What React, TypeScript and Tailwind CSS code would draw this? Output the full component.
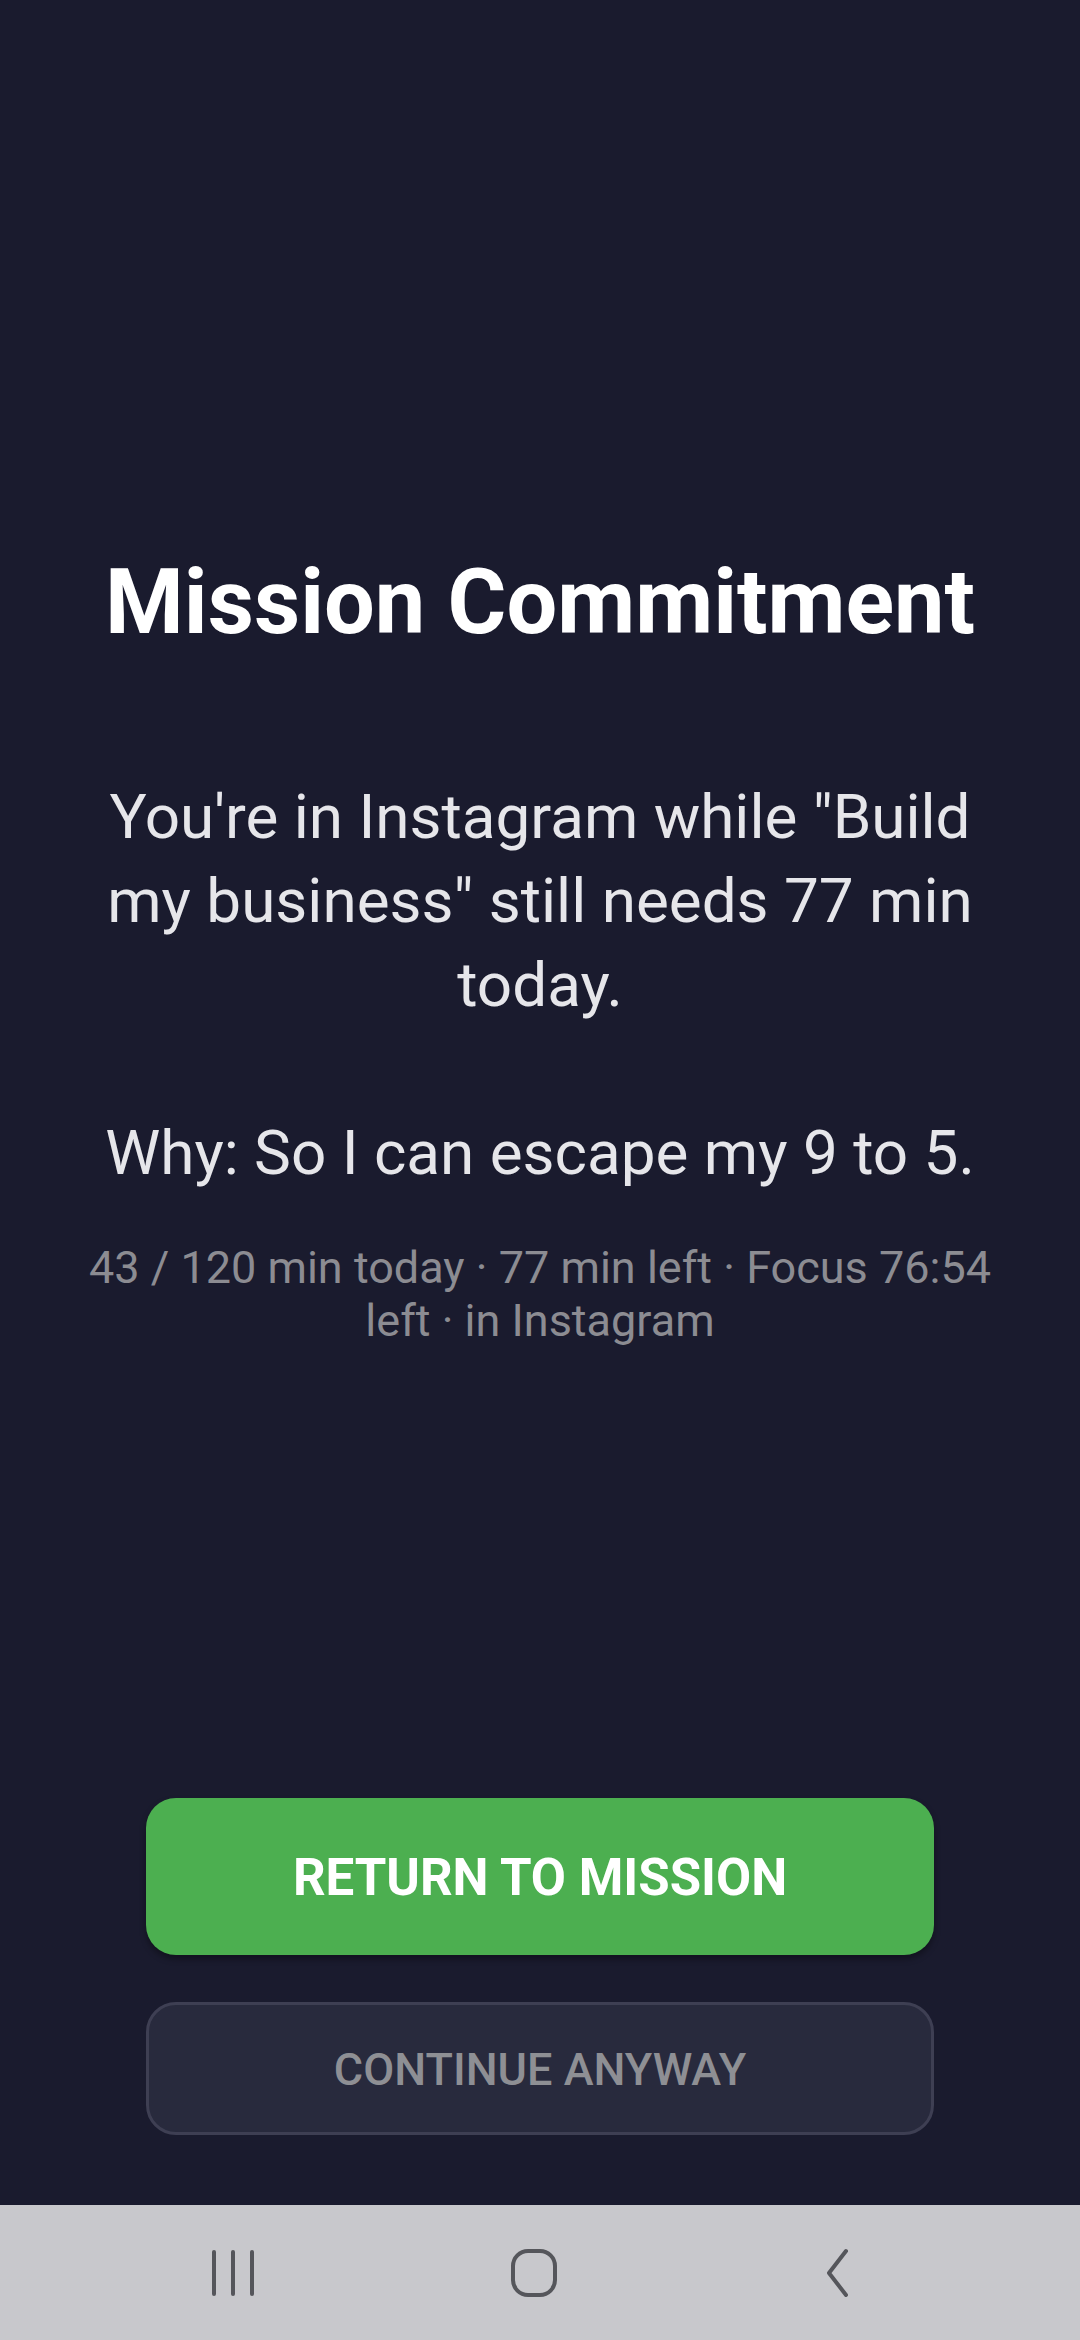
import React from 'react'

const font = { fontFamily: 'Roboto, "Noto Sans", sans-serif' }

function NavBar() {
  return (
    <div className="flex h-[135px] w-full items-center gap-[201px] bg-[#c8c8cc] pl-[183px]">
      {/* recents */}
      <div className="flex w-[100px] justify-center">
        <svg width="60" height="50" viewBox="0 0 60 50">
          <g stroke="#55565b" strokeWidth="4" strokeLinecap="round">
            <line x1="11" y1="4" x2="11" y2="46" />
            <line x1="30" y1="4" x2="30" y2="46" />
            <line x1="49" y1="4" x2="49" y2="46" />
          </g>
        </svg>
      </div>
      {/* home */}
      <div className="flex w-[100px] justify-center">
        <svg width="50" height="50" viewBox="0 0 50 50">
          <rect x="4" y="3" width="42" height="44" rx="15" fill="none" stroke="#55565b" strokeWidth="4" />
        </svg>
      </div>
      {/* back */}
      <div className="flex w-[100px] justify-center">
        <svg width="50" height="50" viewBox="0 0 50 50">
          <polyline points="36,3 19,25 36,47" fill="none" stroke="#55565b" strokeWidth="4" strokeLinecap="round" strokeLinejoin="round" />
        </svg>
      </div>
    </div>
  )
}

export default function App() {
  return (
    <main className="flex min-h-screen w-full flex-col bg-[#1a1b2e]" style={font}>
      <div className="flex h-[2205px] w-full flex-col items-center">
        <div className="flex w-full flex-col items-center px-[72px] pt-[550px] text-center">
          <h1 className="text-[90px] font-bold leading-[105px] text-white">Mission Commitment</h1>

          <p className="mt-[120px] whitespace-pre-line text-[62px] leading-[84px] text-[#e6e6ea]">
            {'You\'re in Instagram while "Build my business" still needs 77 min today.\n\nWhy: So I can escape my 9 to 5.'}
          </p>

          <p className="mt-[47px] text-[45px] leading-[52.7px] text-[#8c8c92]">
            43 / 120 min today · 77 min left · Focus 76:54 left · in Instagram
          </p>
        </div>

        <div className="flex-1" />

        <div className="flex w-full flex-col items-center gap-[47px] px-[146px] pb-[70px]">
          <button className="flex h-[157px] w-full items-center justify-center rounded-[30px] bg-[#4caf50] pt-[4px] text-[51px] font-bold text-white shadow-[0_4px_6px_rgba(0,0,0,0.35)]">
            RETURN TO MISSION
          </button>
          <button className="flex h-[133px] w-full items-center justify-center rounded-[30px] border-[3px] border-[#3e3f53] bg-[#282a3d] pt-[3px] text-[45px] font-medium text-[#8e8f94]">
            CONTINUE ANYWAY
          </button>
        </div>
      </div>
      <NavBar />
    </main>
  )
}
